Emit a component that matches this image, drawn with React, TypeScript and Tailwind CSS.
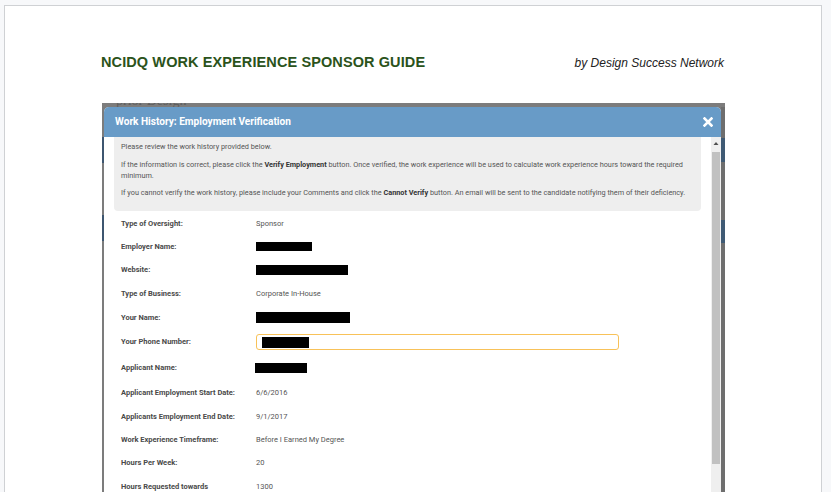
import React from "react";

const rows: { label: string; value?: string; box?: string; phone?: boolean; h: string }[] = [
  { label: "Type of Oversight:", value: "Sponsor", h: "h-[23px]" },
  { label: "Employer Name:", box: "w-[56px] h-[9px]", h: "h-[23px]" },
  { label: "Website:", box: "w-[92px] h-[10px]", h: "h-[24px]" },
  { label: "Type of Business:", value: "Corporate In-House", h: "h-[24px]" },
  { label: "Your Name:", box: "w-[94px] h-[11px]", h: "h-[23px]" },
  { label: "Your Phone Number:", phone: true, h: "h-[26px]" },
  { label: "Applicant Name:", box: "w-[52px] h-[10px] -ml-[1px]", h: "h-[26px]" },
  { label: "Applicant Employment Start Date:", value: "6/6/2016", h: "h-[24px]" },
  { label: "Applicants Employment End Date:", value: "9/1/2017", h: "h-[23px]" },
  { label: "Work Experience Timeframe:", value: "Before I Earned My Degree", h: "h-[23px]" },
  { label: "Hours Per Week:", value: "20", h: "h-[24px]" },
  { label: "Hours Requested towards", value: "1300", h: "h-[23px]" },
];

function Modal() {
  return (
    <div className="flex flex-col w-[617px] h-full bg-white rounded-t-[5px] overflow-hidden font-['Roboto',sans-serif]">
      {/* header */}
      <div className="h-[30px] shrink-0 bg-[#689bc7] flex items-center justify-between pl-[11px] pr-[8px]">
        <span className="text-white font-bold text-[10.1px]">Work History: Employment Verification</span>
        <svg width="10" height="10" viewBox="0 0 10 10">
          <path d="M1.5 1.5 L8.5 8.5 M8.5 1.5 L1.5 8.5" stroke="white" strokeWidth="2.6" strokeLinecap="square" />
        </svg>
      </div>

      <div className="flex flex-1 min-h-0">
        {/* content */}
        <div className="flex-1 px-[10px]">
          <div className="bg-[#eeeeee] rounded-b-[4px] pl-[7px] pr-[6px] pt-[4px] pb-[13px] text-[7.3px] text-[#555] leading-[11px]">
            <p>Please review the work history provided below.</p>
            <p className="mt-[7px]">
              If the information is correct, please click the <b className="text-[#333]">Verify Employment</b> button. Once verified, the work experience will be used to calculate work experience hours toward the required minimum.
            </p>
            <p className="mt-[6px]">
              If you cannot verify the work history, please include your Comments and click the <b className="text-[#333]">Cannot Verify</b> button. An email will be sent to the candidate notifying them of their deficiency.
            </p>
          </div>

          <div className="pl-[7px] pt-[1px]">
            {rows.map((r) => (
              <div key={r.label} className={`flex items-center ${r.h}`}>
                <div className="w-[135px] shrink-0 text-[7.5px] font-bold text-[#4a4a4a]">{r.label}</div>
                {r.value && <div className="text-[7.5px] text-[#555]">{r.value}</div>}
                {r.box && <div className={`bg-black ${r.box}`} />}
                {r.phone && (
                  <div className="w-[363px] h-[16px] border border-[#f8c259] rounded-[3px] flex items-center pl-[5px]">
                    <div className="w-[47px] h-[11px] bg-black" />
                  </div>
                )}
              </div>
            ))}
          </div>
        </div>

        {/* scrollbar */}
        <div className="w-[10px] shrink-0 bg-[#efefef] flex flex-col items-center">
          <svg width="6" height="10" viewBox="0 0 6 10" className="mt-[2px]">
            <path d="M0.5 6 L3 3 L5.5 6 Z" fill="#505050" />
          </svg>
          <div className="w-[8px] h-[312px] bg-[#c1c1c1] mt-[3px]" />
        </div>
      </div>
    </div>
  );
}

export default function App() {
  return (
    <div className="w-[831px] h-[492px] bg-[#f7f8fa] overflow-hidden pl-[4px] pt-[5px]">
      <div className="w-[818px] h-[500px] bg-white border border-[#cfd1d4] pl-[96px]">
        <div className="w-[625px] flex items-center justify-between pt-[43px] h-[71px]">
          <h1 className="font-['Liberation_Sans',Arial,sans-serif] font-bold text-[14.5px] text-[#2b531b] tracking-[0.1px]">
            NCIDQ WORK EXPERIENCE SPONSOR GUIDE
          </h1>
          <span className="font-['Liberation_Sans',Arial,sans-serif] italic text-[12px] text-[#222] pr-[2px]">
            by Design Success Network
          </span>
        </div>

        {/* embedded screenshot */}
        <div className="mt-[26px] ml-[1px] w-[623px] h-[400px] bg-[#7c7c7c] flex flex-col overflow-hidden">
          <div className="h-[4px] shrink-0 overflow-hidden pl-[14px]">
            <div className="font-['Liberation_Serif',serif] text-[14px] leading-[14px] -mt-[9px] text-[#5e5e5e]">prior Design</div>
          </div>
          <div className="flex flex-1 min-h-0">
            <div className="w-[2px] shrink-0 flex flex-col">
              <div className="h-[30px]" />
              <div className="h-[26px] bg-[#3d5670]" />
              <div className="h-[52px]" />
              <div className="h-[26px] bg-[#3d5670]" />
            </div>
            <Modal />
            <div className="w-[4px] shrink-0 flex flex-col bg-[#6e6e6e]">
              <div className="h-[31px]" />
              <div className="h-[24px] bg-[#3f5a74]" />
              <div className="h-[58px]" />
              <div className="h-[23px] bg-[#3f5a74]" />
            </div>
          </div>
        </div>
      </div>
    </div>
  );
}
